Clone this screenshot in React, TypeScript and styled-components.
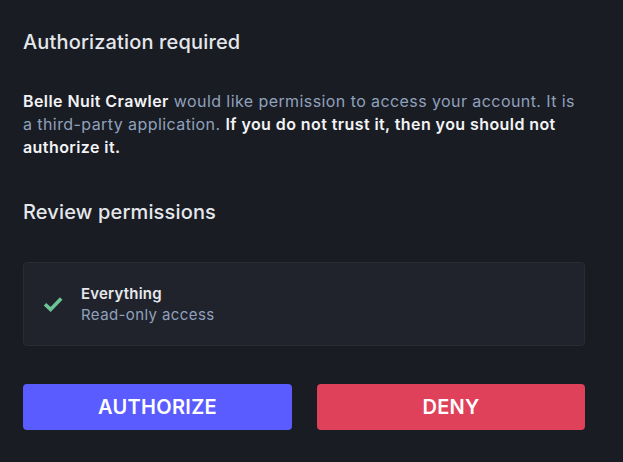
import React from "react";
import styled, { createGlobalStyle } from "styled-components";

const Global = createGlobalStyle`
  html, body { margin: 0; padding: 0; background: #1a1c23; }
  body { font-family: Inter, "Noto Sans", sans-serif; -webkit-font-smoothing: antialiased; }
`;

const Page = styled.div`
  width: 623px;
  height: 462px;
  box-sizing: border-box;
  background: #1a1c23;
  padding: 29px 38px 0 23px;
  display: flex;
  flex-direction: column;
`;

const Title = styled.h2`
  margin: 0;
  font-size: 20px;
  font-weight: 500;
  line-height: 26px;
  color: #e4e7ec;
  letter-spacing: 0.15px;
`;

const Para = styled.p`
  margin: 35px 0 0;
  font-size: 16px;
  line-height: 23px;
  font-weight: 400;
  letter-spacing: 0.42px;
  color: #8fa1bd;
`;

const Strong = styled.span`
  font-weight: 600;
  color: #f2f3f5;
`;

const SectionTitle = styled(Title)`
  margin-top: 40px;
`;

const Card = styled.div`
  margin-top: 37px;
  background: #20232b;
  border: 1px solid #292c35;
  border-radius: 4px;
  height: 84px;
  box-sizing: border-box;
  display: flex;
  align-items: center;
  padding: 0 0 0 19px;
  gap: 18px;
`;

const Check = styled.svg`
  flex: none;
  display: block;
`;

const Info = styled.div`
  display: flex;
  flex-direction: column;
`;

const PermName = styled.div`
  font-size: 15px;
  font-weight: 600;
  letter-spacing: 0.2px;
  color: #e6e8ec;
  line-height: 21px;
`;

const PermDesc = styled.div`
  font-size: 15px;
  letter-spacing: 0.4px;
  color: #8fa1bd;
  line-height: 21px;
`;

const Actions = styled.div`
  margin-top: 38px;
  display: grid;
  grid-template-columns: 269px 268px;
  gap: 25px;
`;

const Button = styled.button<{ $variant: "primary" | "danger" }>`
  height: 46px;
  border: none;
  border-radius: 4px;
  padding: 0;
  font-family: Inter, "Noto Sans", sans-serif;
  font-size: 20px;
  font-weight: 600;
  letter-spacing: 0.3px;
  color: #ffffff;
  text-transform: uppercase;
  background: ${(p) => (p.$variant === "primary" ? "#5b5cff" : "#df415b")};
  cursor: pointer;
`;

export default function App() {
  return (
    <>
      <Global />
      <Page>
        <Title>Authorization required</Title>
        <Para>
          <Strong>Belle Nuit Crawler</Strong> would like permission to access your account. It is a third-party
          application. <Strong>If you do not trust it, then you should not authorize it.</Strong>
        </Para>
        <SectionTitle>Review permissions</SectionTitle>
        <Card>
          <Check width="20" height="16" viewBox="0 0 20 16" fill="none">
            <path d="M2 8.2l5.6 5.2L18.2 2.6" stroke="#6cc494" strokeWidth="3.6" strokeLinecap="butt" strokeLinejoin="miter" />
          </Check>
          <Info>
            <PermName>Everything</PermName>
            <PermDesc>Read-only access</PermDesc>
          </Info>
        </Card>
        <Actions>
          <Button $variant="primary">Authorize</Button>
          <Button $variant="danger">Deny</Button>
        </Actions>
      </Page>
    </>
  );
}
